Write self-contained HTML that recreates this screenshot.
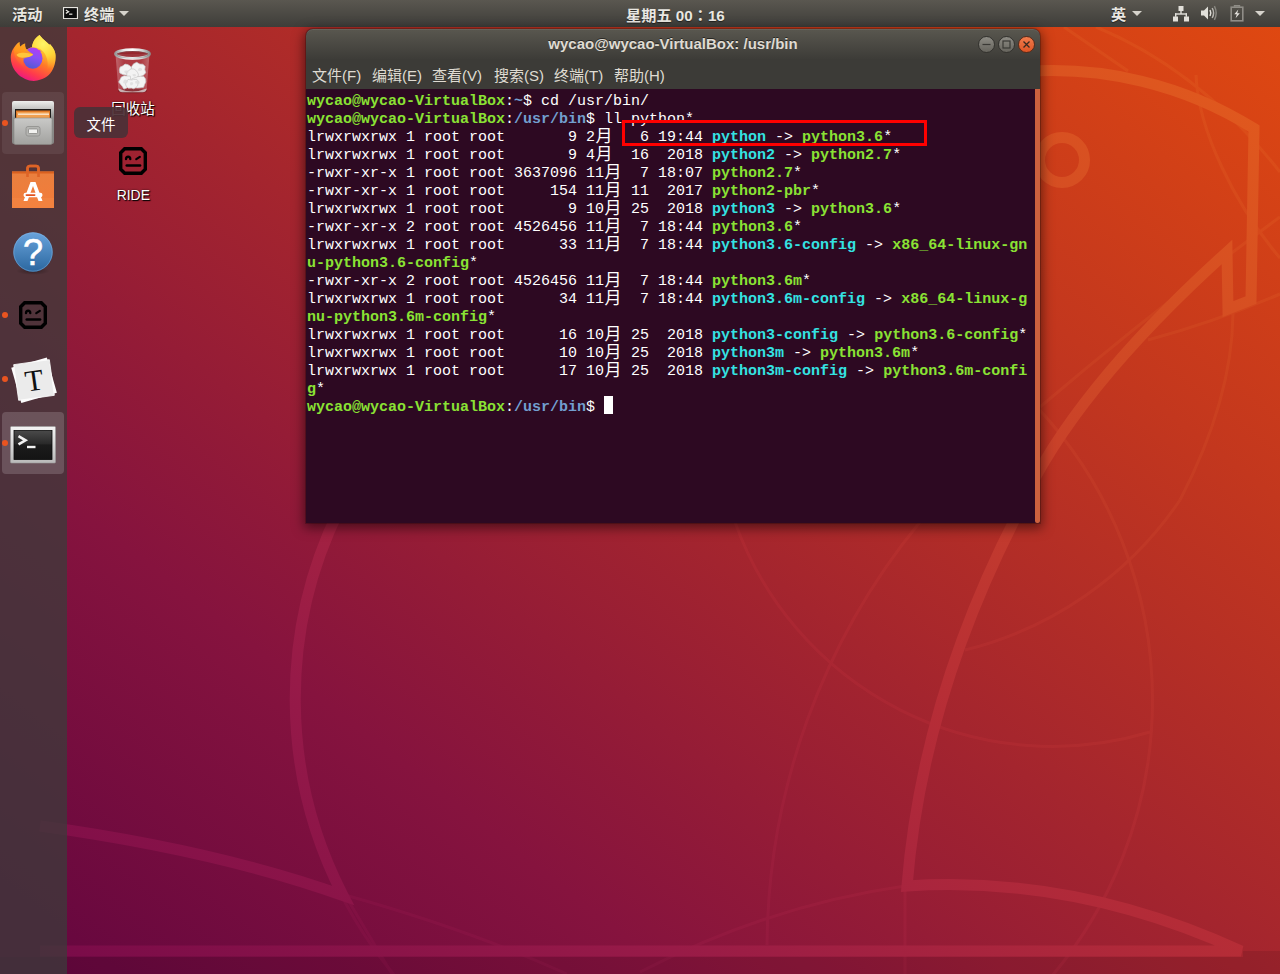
<!DOCTYPE html>
<html lang="zh-CN">
<head>
<meta charset="utf-8">
<title>wycao@wycao-VirtualBox: /usr/bin</title>
<style>
*{box-sizing:border-box;margin:0;padding:0}
html,body{width:1280px;height:974px;overflow:hidden;background:#8a1738}
body{position:relative;font-family:"Liberation Sans","Noto Sans CJK SC",sans-serif;color:#fff}
.abs{position:absolute}
#wall{position:absolute;left:0;top:0;width:1280px;height:974px}
/* top bar */
#topbar{position:absolute;left:0;top:0;width:1280px;height:27px;background:linear-gradient(#5a5750,#3e3d39);color:#e9e7e2;font-size:15.2px;font-weight:bold}
#topbar .t{position:absolute;top:1px;height:27px;line-height:27px;white-space:nowrap;text-shadow:0 1px 1px rgba(0,0,0,.5)}
/* dock */
#dock{position:absolute;left:0;top:27px;width:67px;height:947px;background:rgba(60,60,58,.756)}
.dot{position:absolute;left:2px;width:6px;height:6px;margin-top:-.5px;border-radius:50%;background:#e95420}
.hl{position:absolute;left:2px;width:62px;height:62px;border-radius:4px;background:rgba(255,255,255,.12)}
/* desktop icons */
.dlabel{position:absolute;font-size:14.5px;line-height:18px;white-space:nowrap;color:#fff;text-shadow:1px 1px 1px #000,0 0 2px rgba(0,0,0,.8);text-align:center}
#tip{position:absolute;left:74px;top:107px;width:54px;height:31px;border-radius:6px;background:rgba(76,48,55,.93);font-size:14.5px;line-height:37px;text-align:center;color:#fff}
/* window */
#win{position:absolute;left:306px;top:29px;width:734px;height:494px;border-radius:7px 7px 0 0;background:#2d0922;box-shadow:0 3px 12px 2px rgba(0,0,0,.5),0 0 0 1px rgba(0,0,0,.2)}
#title{position:absolute;left:0;top:0;width:734px;height:31px;border-radius:7px 7px 0 0;background:linear-gradient(#59574f,#3c3b37);box-shadow:inset 0 1px 0 rgba(255,255,255,.08)}
#title .tt{position:absolute;left:0;width:734px;top:0;height:31px;line-height:30px;text-align:center;font-weight:bold;font-size:15px;color:#dfdbd2;text-shadow:0 -1px 0 rgba(0,0,0,.5)}
#menu{position:absolute;left:0;top:30px;width:734px;height:30px;background:#3c3b37;color:#dfdbd2;font-size:15px}
#menu span{position:absolute;top:0;height:30px;line-height:34px;white-space:nowrap}
#term{position:absolute;left:0;top:60px;width:734px;height:434px;background:#2d0922;overflow:hidden}
#sb{position:absolute;left:729px;top:60px;width:5px;height:434px;background:#cd613e;border-radius:0 0 2px 2px}
.r{position:absolute;left:1px;height:18px;line-height:18px;font-family:"Liberation Mono","Noto Sans CJK SC",monospace;font-size:15px;white-space:pre;color:#fff}
.r b{font-weight:bold}
.g{color:#8ae234}.bl{color:#729fcf}.c{color:#34e2e2}
.m{display:inline-block;width:18px;text-align:center;font-size:17px;line-height:18px;vertical-align:top}
#cur{position:absolute;left:298px;top:307px;width:9px;height:18px;background:#fff}
#redbox{position:absolute;left:622px;top:120px;width:305px;height:26px;border:3px solid #ff0000}
.wb{position:absolute;top:6.5px;margin-left:-.5px;width:17px;height:17px;border-radius:50%;border:1px solid #33322e;background:linear-gradient(#8d8b84,#66645d)}
.wb.close{background:linear-gradient(#f27c4c,#de5526);border-color:#5a2a18}
</style>
</head>
<body>
<svg id="wall" viewBox="0 0 1280 974">
<defs>
<linearGradient id="wg" gradientUnits="userSpaceOnUse" x1="67" y1="974" x2="985.7" y2="-202.7">
<stop offset="0" stop-color="#66073f"/><stop offset="0.25" stop-color="#86133e"/><stop offset="0.5" stop-color="#a4252e"/><stop offset="0.75" stop-color="#c3371e"/><stop offset="1" stop-color="#df4811"/>
</linearGradient>
<linearGradient id="wl" gradientUnits="userSpaceOnUse" x1="67" y1="974" x2="985.7" y2="-202.7">
<stop offset="0" stop-color="#790b49"/><stop offset="0.25" stop-color="#971a48"/><stop offset="0.5" stop-color="#b62d36"/><stop offset="0.75" stop-color="#cf4825"/><stop offset="1" stop-color="#e55d1c"/>
</linearGradient>
</defs>
<rect x="0" y="0" width="1280" height="974" fill="url(#wg)"/>
<g fill="none" stroke="url(#wl)" stroke-width="3" opacity="0.45">
<circle cx="723.500" cy="700" r="429"/>
<path d="M735 522A337 337 0 0 0 1150 732"/>
<path d="M1180 500A366 366 0 0 1 965 650"/>
<path d="M920 522A674 674 0 0 0 767 945"/>
<path d="M640 972Q770 905 905 886V974"/>
<path d="M345 895L392 974M345 895Q470 930 567 974"/>
<path d="M1064 27L1128 71M1096 27Q1200 70 1280 172M1196 75C1198 130 1235 205 1280 258M1280 217Q1160 305 1040 407M1233 314Q1232 400 1180 500M1280 294Q1215 322 1148 340"/>
</g>
<path d="M1243 951H1280V974H0V957H1243Z" fill="#000" opacity="0.085"/>
<g fill="none" stroke="url(#wl)" stroke-width="11" stroke-linejoin="miter" stroke-miterlimit="4">
<path d="M40 826Q215 850 343 895.500A429 429 0 0 1 340 508"/>
<path d="M1020 72A380 380 0 0 1 1254 128.5L1251 300L1228 309L1227 252Q1067.500 396 1017 515Q922 700 907 886Q1076 875 1241 951H40"/>
<circle cx="1062" cy="160" r="22.500"/>
</g>
</svg>

<div id="topbar">
<span class="t" style="left:12px">活动</span>
<span class="t" style="left:84px">终端</span>
<span class="t" style="left:626px">星期五 00<span lang="ja" style="font-family:'Noto Sans CJK JP','Noto Sans CJK TC',sans-serif">：</span>16</span>
<span class="t" style="left:1111px">英</span>
<svg class="abs" style="left:62.5px;top:7px" width="15" height="12.2" viewBox="0 0 16 13"><rect x="0.5" y="0.5" width="15" height="12" fill="#0c0c0c" stroke="#e6e4df" stroke-width="1.4"/><path d="M3 3.2 L6 5 L3 6.8" fill="none" stroke="#e6e4df" stroke-width="1.3"/><rect x="6.5" y="7" width="3.5" height="1.3" fill="#e6e4df"/></svg>
<svg class="abs" style="left:119px;top:11px" width="10" height="5" viewBox="0 0 10 5"><path d="M0 0H10L5 5Z" fill="#d6d3cc"/></svg>
<svg class="abs" style="left:1132px;top:11px" width="10" height="5" viewBox="0 0 10 5"><path d="M0 0H10L5 5Z" fill="#d6d3cc"/></svg>
<svg class="abs" style="left:1255px;top:11px" width="10" height="5" viewBox="0 0 10 5"><path d="M0 0H10L5 5Z" fill="#d6d3cc"/></svg>
<svg class="abs" style="left:1173px;top:6px" width="16" height="16" viewBox="0 0 16 16"><g fill="#e2e0da"><rect x="5.5" y="0" width="5" height="5"/><rect x="0" y="10.5" width="5" height="5"/><rect x="11" y="10.5" width="5" height="5"/><rect x="7.3" y="5" width="1.4" height="3"/><rect x="2" y="7.3" width="12" height="1.4"/><rect x="2" y="7.3" width="1.4" height="3.5"/><rect x="12.6" y="7.3" width="1.4" height="3.5"/></g></svg>
<svg class="abs" style="left:1200px;top:5px" width="17" height="16" viewBox="0 0 17 16"><path d="M1 5.5H4L8 1.5V14.5L4 10.5H1Z" fill="#e2e0da"/><path d="M10 5 Q11.6 8 10 11" fill="none" stroke="#e2e0da" stroke-width="1.5"/><path d="M12.2 3 Q15 8 12.2 13" fill="none" stroke="#b5b3ad" stroke-width="1.5"/><path d="M14.4 1.2 Q18 8 14.4 14.8" fill="none" stroke="#8a8882" stroke-width="1.4"/></svg>
<svg class="abs" style="left:1230px;top:5px" width="14" height="17" viewBox="0 0 14 17"><path d="M4.5 1.8V0.7H9.5V1.8" fill="none" stroke="#8f8d87" stroke-width="1.4"/><rect x="1.2" y="2.2" width="11.6" height="13.6" fill="none" stroke="#8f8d87" stroke-width="1.6"/><path d="M8.3 4.5L4.3 9.3H6.8L5.6 13.2L9.8 8.2H7.2Z" fill="#e6e4df"/></svg>
</div>

<div id="dock">
<div class="hl" style="top:65px;background:rgba(255,255,255,.07)"></div>
<div class="hl" style="top:385px;background:rgba(255,255,255,.165)"></div>
<div class="dot" style="top:93px"></div>
<div class="dot" style="top:285px"></div>
<div class="dot" style="top:349px"></div>
<div class="dot" style="top:413px"></div>
<!-- firefox -->
<svg class="abs" style="left:5px;top:3px" width="56" height="56" viewBox="0 0 56 56">
<defs>
<linearGradient id="ff1" gradientUnits="userSpaceOnUse" x1="42" y1="8" x2="20" y2="52"><stop offset="0" stop-color="#fff25c"/><stop offset="0.28" stop-color="#ffc02e"/><stop offset="0.52" stop-color="#ff7a27"/><stop offset="0.78" stop-color="#ff3a4c"/><stop offset="1" stop-color="#e9108e"/></linearGradient>
<radialGradient id="ff4" gradientUnits="userSpaceOnUse" cx="38" cy="14" r="26"><stop offset="0" stop-color="#fff567"/><stop offset="0.5" stop-color="#ffd93a" stop-opacity="0.9"/><stop offset="1" stop-color="#ffb02a" stop-opacity="0"/></radialGradient>
<linearGradient id="ff2" gradientUnits="userSpaceOnUse" x1="32" y1="17" x2="25" y2="39"><stop offset="0" stop-color="#b43cf4"/><stop offset="0.45" stop-color="#8a4ff6"/><stop offset="1" stop-color="#4f5ad2"/></linearGradient>
<linearGradient id="ff3" gradientUnits="userSpaceOnUse" x1="22" y1="14" x2="11" y2="34"><stop offset="0" stop-color="#ffa51e"/><stop offset="0.45" stop-color="#ff9a1c" stop-opacity="0.9"/><stop offset="1" stop-color="#ff7a20" stop-opacity="0"/></linearGradient>
</defs>
<path d="M34.500 4.900C36.500 7.500 38.500 9.500 40.300 10.900C42 12.300 43.300 13.500 44.300 14.700L45.100 14.300C46.600 15.800 47.900 17.500 48.900 19.600C50.200 22.200 50.700 25 50.600 27.600C50.500 31 50 34 48.900 36.800C47.800 40 46 42.800 43.700 44.900C41.400 47.200 38.600 48.700 35.700 49.500C33.500 50.400 31 50.900 28.800 50.900C25.800 50.900 22.800 50.200 20.100 48.900C16.600 47.500 13.600 45.300 11.500 42.600C9.400 40.200 7.900 37.400 6.900 34.500C6.100 32.300 5.750 30 5.750 27.600C5.750 25 6.400 22.500 7.500 20.100C8.400 18.200 9.600 16.500 10.900 15C11.900 13.900 13.100 12.900 14.400 12.100C14.300 13.700 14.600 15.300 15.200 16.700C16.600 15.300 18.300 14.200 20.100 13.500C19.900 15.200 20.100 16.900 20.700 18.400L21.900 19.600C23.500 18.300 25.200 17.600 27 17.300C27 16.500 27.100 15.700 27.300 15C27.800 12.800 28.700 10.900 29.900 9.200C31.200 7.500 32.700 6 34.500 4.900Z" fill="url(#ff1)"/>
<path d="M34.500 4.900C36.500 7.500 38.500 9.500 40.300 10.900C42 12.300 43.300 13.500 44.300 14.700L45.100 14.300C46.600 15.800 47.900 17.500 48.900 19.600C50.200 22.200 50.700 25 50.600 27.600C50.500 31 50 34 48.900 36.800C47 40 44 42 41 43C43.500 38 43.500 30 40 24C37 19 32 17 27 17.300C27 16.500 27.100 15.700 27.300 15C27.800 12.800 28.700 10.900 29.900 9.200C31.200 7.500 32.700 6 34.500 4.900Z" fill="url(#ff4)"/>
<ellipse cx="27.800" cy="28.200" rx="9.700" ry="10.600" fill="url(#ff2)"/>
<path d="M32 20.200C33.500 19.800 35.500 20.300 36.800 21.800C35.500 21.300 34.300 21.500 33.500 22.300C33.200 21.400 32.700 20.700 32 20.200Z" fill="#b13cf2"/>
<path d="M9 19C11 16.500 13 14.500 14.400 12.100C14.300 13.700 14.600 15.300 15.200 16.700C16.600 15.300 18.300 14.200 20.100 13.500C19.900 15.200 20.100 16.900 20.700 18.400C22.500 20.500 25.500 22.500 28.200 24.200C27 26 24.500 27 22 27.300C20 27.800 18.600 29.200 18.200 31C17.800 33 18.300 35.500 19.500 37.500C15 35 11 30 9.500 25C9 23 8.800 21 9 19Z" fill="url(#ff3)"/>
<path d="M11.500 24.700C13 23 16 22.300 19 22.800C22 23.200 25 23.500 28.200 24.200C27 26 24.500 27 22 27.300C19 27.800 16.500 28 14.500 27.300C13 26.700 12 25.800 11.500 24.700Z" fill="#ffc63a"/>
</svg>
<!-- files -->
<svg class="abs" style="left:9px;top:72px" width="48" height="48" viewBox="0 0 48 48">
<defs>
<linearGradient id="fl1" x1="0" y1="0" x2="0" y2="1"><stop offset="0" stop-color="#efefed"/><stop offset="0.18" stop-color="#c4c4c2"/><stop offset="0.4" stop-color="#8f8f8d"/><stop offset="1" stop-color="#858583"/></linearGradient>
<linearGradient id="fl2" x1="0" y1="0" x2="0" y2="1"><stop offset="0" stop-color="#c9c9c7"/><stop offset="1" stop-color="#a2a29f"/></linearGradient>
</defs>
<rect x="3" y="2" width="42" height="43" rx="2" fill="url(#fl1)"/>
<rect x="6" y="10" width="36" height="9" fill="#1e1c1a"/>
<rect x="7" y="11.5" width="34" height="7.5" fill="#e07a28"/>
<rect x="8" y="13" width="32" height="6" fill="#f0a050"/>
<rect x="9" y="14.5" width="31" height="1.4" fill="#fbe7d0"/>
<rect x="5" y="19" width="38" height="26.5" rx="1.5" fill="url(#fl2)" stroke="#8a8a87" stroke-width="0.6"/>
<rect x="17" y="27.5" width="14" height="9.5" rx="2" fill="#b4b4b1" stroke="#8e8e8b" stroke-width="0.8"/>
<rect x="19.5" y="30" width="9" height="4.5" rx="0.8" fill="#f2f2f0" stroke="#7d7d7a" stroke-width="0.7"/>
</svg>
<!-- software -->
<svg class="abs" style="left:9px;top:136px" width="48" height="48" viewBox="0 0 48 48">
<defs><linearGradient id="sw1" x1="0" y1="0" x2="0.3" y2="1"><stop offset="0" stop-color="#e8803f"/><stop offset="1" stop-color="#f27c3a"/></linearGradient></defs>
<path d="M18.5 12V5.5Q18.5 3 21 3H27Q29.500 3 29.500 5.5V12" fill="none" stroke="#d95a1e" stroke-width="2.6"/>
<rect x="3" y="8.500" width="42" height="36.500" fill="url(#sw1)"/>
<rect x="3" y="8.500" width="42" height="2" fill="#d9601f"/>
<rect x="3" y="35" width="42" height="10" fill="#f58a48" opacity="0.45"/>
<path d="M18.5 14V5.500Q18.5 3 21 3H27Q29.500 3 29.500 5.500V14" fill="none" stroke="#de6427" stroke-width="2.600"/>
<path d="M21.500 19H26.500L33.500 38H29.500L24 23L18.500 38H14.500Z" fill="#fff"/>
<rect x="14.500" y="29.800" width="19" height="4.400" rx="2.200" fill="#fff"/>
<rect x="16.500" y="31.200" width="10" height="1.700" rx="0.800" fill="#e2531f"/>
</svg>
<!-- help -->
<svg class="abs" style="left:9px;top:201px" width="48" height="50" viewBox="0 0 48 50">
<defs><linearGradient id="hp1" x1="0" y1="0" x2="0" y2="1"><stop offset="0" stop-color="#69a3dc"/><stop offset="1" stop-color="#2b679f"/></linearGradient>
<radialGradient id="hp2" cx="0.5" cy="0.5" r="0.5"><stop offset="0" stop-color="#000" stop-opacity="0.35"/><stop offset="1" stop-color="#000" stop-opacity="0"/></radialGradient></defs>
<ellipse cx="24" cy="43" rx="17" ry="4" fill="url(#hp2)"/>
<circle cx="24" cy="24" r="19.700" fill="url(#hp1)"/>
<circle cx="24" cy="24" r="19.200" fill="none" stroke="#8ebde8" stroke-opacity="0.5" stroke-width="0.8"/>
<text x="24" y="37" text-anchor="middle" font-family="Liberation Sans, sans-serif" font-size="36" fill="#fff" stroke="#fff" stroke-width="0.6">?</text>
</svg>
<!-- ride -->
<svg class="abs" style="left:17px;top:272px" width="32" height="32" viewBox="0 0 32 32">
<path d="M7.700 3.700H24.300L28.300 7.700V24.300L24.300 28.300H7.700L3.700 24.300V7.700Z" fill="none" stroke="#000" stroke-width="3.400" stroke-linejoin="miter"/>
<path d="M9 14.200C9 10.900 13.300 10.900 13.300 14.200" fill="none" stroke="#000" stroke-width="2.300" stroke-linecap="round"/>
<path d="M19.300 14.100L22.800 11.900" fill="none" stroke="#000" stroke-width="2.300" stroke-linecap="round"/>
<path d="M9.800 20.500H23" fill="none" stroke="#000" stroke-width="2.700" stroke-linecap="round"/>
</svg>
<!-- text -->
<svg class="abs" style="left:7px;top:326px" width="54" height="54" viewBox="0 0 54 54">
<g transform="rotate(-16 27 27)"><rect x="8.500" y="9" width="37" height="36.500" fill="#fcfcfc"/></g>
<g transform="rotate(-8 27 27)"><rect x="9" y="9" width="36" height="36" fill="#ebebeb" stroke="#fdfdfd" stroke-width="0.800"/>
<text x="27" y="37.500" text-anchor="middle" font-family="Liberation Serif, serif" font-size="30" fill="#111">T</text></g>
</svg>
<!-- terminal -->
<svg class="abs" style="left:9px;top:393px" width="48" height="48" viewBox="0 0 48 48">
<defs><linearGradient id="tm1" x1="0" y1="0" x2="0" y2="1"><stop offset="0" stop-color="#f4f4f4"/><stop offset="1" stop-color="#b9b9b9"/></linearGradient>
<linearGradient id="tm2" x1="0" y1="0" x2="0" y2="1"><stop offset="0" stop-color="#4a4a4a"/><stop offset="0.45" stop-color="#2a2a2a"/><stop offset="0.5" stop-color="#1b1b1b"/><stop offset="1" stop-color="#141414"/></linearGradient></defs>
<rect x="1.500" y="6.500" width="45" height="36.500" rx="1" fill="url(#tm1)" stroke="#9a9a9a" stroke-width="0.600"/>
<rect x="5" y="10.500" width="38" height="29" fill="url(#tm2)" stroke="#0a0a0a" stroke-width="0.800"/>
<path d="M9.500 16.200L16.500 20.300L9.500 24.400" fill="none" stroke="#f2f2f2" stroke-width="2.600"/>
<rect x="18" y="25.800" width="8.500" height="2.400" fill="#f2f2f2"/>
</svg>
</div>

<!-- trash -->
<svg class="abs" style="left:109px;top:46px" width="48" height="48" viewBox="0 0 48 48">
<defs><linearGradient id="tr1" x1="0" y1="0" x2="1" y2="0"><stop offset="0" stop-color="#ffffff" stop-opacity="0.30"/><stop offset="0.25" stop-color="#ffffff" stop-opacity="0.10"/><stop offset="0.75" stop-color="#ffffff" stop-opacity="0.10"/><stop offset="1" stop-color="#ffffff" stop-opacity="0.30"/></linearGradient>
<linearGradient id="tr2" x1="0" y1="0" x2="1" y2="0"><stop offset="0" stop-color="#9a9a9a"/><stop offset="0.25" stop-color="#e9e9e9"/><stop offset="0.5" stop-color="#ffffff"/><stop offset="0.8" stop-color="#d0d0d0"/><stop offset="1" stop-color="#8e8e8e"/></linearGradient></defs>
<ellipse cx="23.500" cy="45" rx="14.500" ry="2.300" fill="#000" opacity="0.22"/>
<path d="M6.500 8L9.300 42.500Q9.600 46 13.500 46.300H33.500Q37.400 46 37.700 42.500L40.500 8Z" fill="url(#tr1)"/>
<path d="M23.4 24.0L22.5 26.2L21.4 28.5L18.8 29.1L16.3 28.9L13.6 28.5L10.8 27.0L10.3 24.0L11.1 21.1L13.9 19.8L16.0 18.1L18.8 18.6L21.1 19.9L22.5 21.8Z" fill="#f3f3f3" stroke="#c9c9c9" stroke-width="0.7"/><path d="M35.8 23.5L36.8 26.8L34.4 29.2L31.2 30.5L27.8 30.5L25.6 28.0L23.6 26.1L22.2 23.5L22.7 20.4L24.6 17.8L27.7 16.3L30.8 18.1L34.0 18.2L36.2 20.5Z" fill="#f3f3f3" stroke="#c9c9c9" stroke-width="0.7"/><path d="M29.5 29.0L28.3 31.1L27.2 33.3L24.6 33.6L22.0 35.2L19.3 33.9L18.0 31.4L17.9 29.0L17.3 26.3L19.7 24.6L22.0 22.9L25.0 23.0L27.3 24.7L28.7 26.7Z" fill="#f3f3f3" stroke="#c9c9c9" stroke-width="0.7"/><path d="M23.2 36.0L22.2 38.8L20.1 40.5L17.8 41.9L14.9 43.1L13.1 40.2L11.6 38.4L9.7 36.0L11.1 33.4L12.4 30.9L15.1 29.7L17.9 30.0L21.3 30.0L21.7 33.5Z" fill="#f3f3f3" stroke="#c9c9c9" stroke-width="0.7"/><path d="M36.8 36.0L35.6 38.5L34.6 41.3L31.4 41.8L28.5 42.0L25.2 41.5L24.1 38.6L22.9 36.0L22.8 32.8L26.3 31.6L28.7 30.7L31.4 30.3L34.8 30.4L36.6 33.1Z" fill="#f3f3f3" stroke="#c9c9c9" stroke-width="0.7"/><path d="M28.9 38.0L28.6 40.0L26.8 41.5L24.8 42.8L22.4 42.1L19.5 42.2L17.3 40.5L16.5 38.0L17.6 35.6L19.1 33.4L22.4 34.0L24.7 33.5L27.9 33.4L29.4 35.6Z" fill="#f3f3f3" stroke="#c9c9c9" stroke-width="0.7"/><path d="M19.6 25.8L18.8 27.5L16.7 27.4L15.5 26.5L15.2 25.1L16.7 24.5L18.5 24.5Z" fill="#dcdcdc" opacity="0.8"/><path d="M33.1 23.5L32.5 24.6L30.9 25.0L28.8 24.5L29.3 22.7L30.9 21.8L32.5 22.3Z" fill="#dcdcdc" opacity="0.8"/><path d="M27.2 29.3L26.4 30.2L25.1 30.5L23.9 29.8L23.3 28.5L25.1 28.0L26.4 28.3Z" fill="#dcdcdc" opacity="0.8"/><path d="M19.4 35.7L17.6 36.9L15.9 37.7L14.1 36.7L14.5 34.9L15.8 33.3L17.9 34.2Z" fill="#dcdcdc" opacity="0.8"/><path d="M30.7 36.2L30.4 37.7L28.5 37.8L26.2 37.3L26.3 35.2L28.4 34.3L30.1 35.1Z" fill="#dcdcdc" opacity="0.8"/><path d="M24.2 37.7L23.6 38.7L21.9 39.5L21.0 38.2L21.1 37.3L21.9 35.9L23.9 36.5Z" fill="#dcdcdc" opacity="0.8"/>
<path d="M9.300 42.500Q9.600 46 13.500 46.300H33.500Q37.400 46 37.700 42.500Q30 45.500 23.500 45.500Q16 45.500 9.300 42.500Z" fill="#e0e0e0" opacity="0.7"/>
<ellipse cx="23.500" cy="8" rx="17" ry="4.300" fill="#7a2a32" opacity="0.35"/>
<ellipse cx="23.500" cy="8" rx="17" ry="4.300" fill="none" stroke="url(#tr2)" stroke-width="2.800"/>
<ellipse cx="23.500" cy="8.800" rx="15.600" ry="3.300" fill="none" stroke="#6f6f6f" stroke-opacity="0.5" stroke-width="0.700"/>
</svg>
<!-- ride desktop -->
<svg class="abs" style="left:117px;top:145px" width="32" height="32" viewBox="0 0 32 32">
<path d="M7.700 3.700H24.300L28.300 7.700V24.300L24.300 28.300H7.700L3.700 24.300V7.700Z" fill="none" stroke="#000" stroke-width="3.400"/>
<path d="M9 14.200C9 10.900 13.300 10.900 13.300 14.200" fill="none" stroke="#000" stroke-width="2.300" stroke-linecap="round"/>
<path d="M19.300 14.100L22.800 11.900" fill="none" stroke="#000" stroke-width="2.300" stroke-linecap="round"/>
<path d="M9.800 20.500H23" fill="none" stroke="#000" stroke-width="2.700" stroke-linecap="round"/>
</svg>
<div class="dlabel" style="left:103px;top:100px;width:60px">回收站</div>
<div class="dlabel" style="left:103px;top:186px;width:60px"><span style="display:inline-block;transform:scaleX(.96)">RIDE</span></div>
<div id="tip">文件</div>

<div id="win">
<div id="title"><div class="tt">wycao@wycao-VirtualBox: /usr/bin</div>
<div class="wb" style="left:672px"><svg class="abs" style="left:0;top:0" width="15" height="15" viewBox="0 0 15 15"><path d="M3.500 7.500H11.500" stroke="#3a3935" stroke-width="1.200"/></svg></div>
<div class="wb" style="left:692px"><svg class="abs" style="left:0;top:0" width="15" height="15" viewBox="0 0 15 15"><rect x="4" y="4" width="7" height="7" fill="none" stroke="#3a3935" stroke-width="1.200"/></svg></div>
<div class="wb close" style="left:712px"><svg class="abs" style="left:0;top:0" width="15" height="15" viewBox="0 0 15 15"><path d="M4.500 4.500L10.500 10.500M10.500 4.500L4.500 10.500" stroke="#3a2a20" stroke-width="1.300"/></svg></div>
</div>
<div id="menu">
<span style="left:6px">文件(F)</span>
<span style="left:66px">编辑(E)</span>
<span style="left:126px">查看(V)</span>
<span style="left:188px">搜索(S)</span>
<span style="left:248px">终端(T)</span>
<span style="left:308px">帮助(H)</span>
</div>
<div id="term">
<!--ROWS-->
<div class="r" style="top:4px"><b class="g">wycao@wycao-VirtualBox</b>:<b class="bl">~</b>$ cd /usr/bin/</div>
<div class="r" style="top:22px"><b class="g">wycao@wycao-VirtualBox</b>:<b class="bl">/usr/bin</b>$ ll python*</div>
<div class="r" style="top:40px">lrwxrwxrwx 1 root root       9 2<span class="m">月</span>   6 19:44 <b class="c">python</b> -&gt; <b class="g">python3.6</b>*</div>
<div class="r" style="top:58px">lrwxrwxrwx 1 root root       9 4<span class="m">月</span>  16  2018 <b class="c">python2</b> -&gt; <b class="g">python2.7</b>*</div>
<div class="r" style="top:76px">-rwxr-xr-x 1 root root 3637096 11<span class="m">月</span>  7 18:07 <b class="g">python2.7</b>*</div>
<div class="r" style="top:94px">-rwxr-xr-x 1 root root     154 11<span class="m">月</span> 11  2017 <b class="g">python2-pbr</b>*</div>
<div class="r" style="top:112px">lrwxrwxrwx 1 root root       9 10<span class="m">月</span> 25  2018 <b class="c">python3</b> -&gt; <b class="g">python3.6</b>*</div>
<div class="r" style="top:130px">-rwxr-xr-x 2 root root 4526456 11<span class="m">月</span>  7 18:44 <b class="g">python3.6</b>*</div>
<div class="r" style="top:148px">lrwxrwxrwx 1 root root      33 11<span class="m">月</span>  7 18:44 <b class="c">python3.6-config</b> -&gt; <b class="g">x86_64-linux-gn</b></div>
<div class="r" style="top:166px"><b class="g">u-python3.6-config</b>*</div>
<div class="r" style="top:184px">-rwxr-xr-x 2 root root 4526456 11<span class="m">月</span>  7 18:44 <b class="g">python3.6m</b>*</div>
<div class="r" style="top:202px">lrwxrwxrwx 1 root root      34 11<span class="m">月</span>  7 18:44 <b class="c">python3.6m-config</b> -&gt; <b class="g">x86_64-linux-g</b></div>
<div class="r" style="top:220px"><b class="g">nu-python3.6m-config</b>*</div>
<div class="r" style="top:238px">lrwxrwxrwx 1 root root      16 10<span class="m">月</span> 25  2018 <b class="c">python3-config</b> -&gt; <b class="g">python3.6-config</b>*</div>
<div class="r" style="top:256px">lrwxrwxrwx 1 root root      10 10<span class="m">月</span> 25  2018 <b class="c">python3m</b> -&gt; <b class="g">python3.6m</b>*</div>
<div class="r" style="top:274px">lrwxrwxrwx 1 root root      17 10<span class="m">月</span> 25  2018 <b class="c">python3m-config</b> -&gt; <b class="g">python3.6m-confi</b></div>
<div class="r" style="top:292px"><b class="g">g</b>*</div>
<div class="r" style="top:310px"><b class="g">wycao@wycao-VirtualBox</b>:<b class="bl">/usr/bin</b>$ </div>
<div id="cur"></div>
<!--/ROWS-->
</div>
<div id="sb"></div>
</div>
<div id="redbox"></div>
</body>
</html>
